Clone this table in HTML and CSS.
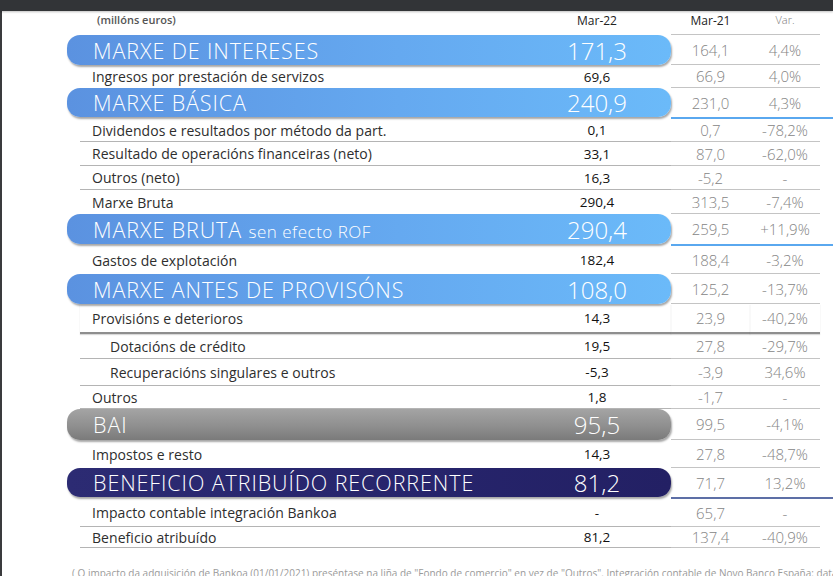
FILE: index.html
```html
<!DOCTYPE html>
<html lang="gl">
<head>
<meta charset="utf-8">
<title>Conta de resultados</title>
<link rel="stylesheet" href="styles.css">
</head>
<body>
<div class="topbar"></div>
<div class="page">
  <div class="table">
    <div class="row head">
      <div class="main"><span class="label units">(millóns euros)</span><span class="num hnum">Mar-22</span></div>
      <div class="c1 hcell">Mar-21</div>
      <div class="c2 hcell var">Var.</div>
    </div>

    <div class="row barrow h30">
      <div class="bar blue"><span class="blabel">MARXE DE INTERESES</span><span class="bnum">171,3</span></div>
      <div class="c1">164,1</div><div class="c2">4,4%</div>
    </div>
    <div class="row h23">
      <div class="main"><span class="label">Ingresos por prestación de servizos</span><span class="num">69,6</span></div>
      <div class="c1">66,9</div><div class="c2">4,0%</div>
    </div>
    <div class="row barrow h29">
      <div class="bar blue"><span class="blabel">MARXE BÁSICA</span><span class="bnum">240,9</span></div>
      <div class="c1 nb">231,0</div><div class="c2 nb">4,3%</div>
    </div>
    <div class="rule blue-rule"></div>

    <div class="row h23">
      <div class="main lined"><span class="label">Dividendos e resultados por método da part.</span><span class="num">0,1</span></div>
      <div class="c1">0,7</div><div class="c2">-78,2%</div>
    </div>
    <div class="row">
      <div class="main lined"><span class="label">Resultado de operacións financeiras (neto)</span><span class="num">33,1</span></div>
      <div class="c1">87,0</div><div class="c2">-62,0%</div>
    </div>
    <div class="row">
      <div class="main lined"><span class="label">Outros (neto)</span><span class="num">16,3</span></div>
      <div class="c1">-5,2</div><div class="c2">-</div>
    </div>
    <div class="row">
      <div class="main"><span class="label">Marxe Bruta</span><span class="num">290,4</span></div>
      <div class="c1">313,5</div><div class="c2">-7,4%</div>
    </div>
    <div class="row barrow h30">
      <div class="bar blue"><span class="blabel">MARXE BRUTA <span class="bsmall">sen efecto ROF</span></span><span class="bnum">290,4</span></div>
      <div class="c1 nb">259,5</div><div class="c2 nb">+11,9%</div>
    </div>
    <div class="rule blue-rule"></div>

    <div class="row h28">
      <div class="main"><span class="label">Gastos de explotación</span><span class="num">182,4</span></div>
      <div class="c1">188,4</div><div class="c2">-3,2%</div>
    </div>
    <div class="row barrow h30">
      <div class="bar blue"><span class="blabel">MARXE ANTES DE PROVISÓNS</span><span class="bnum">108,0</span></div>
      <div class="c1">125,2</div><div class="c2">-13,7%</div>
    </div>
    <div class="row h30 thick">
      <div class="main"><span class="label">Provisións e deterioros</span><span class="num">14,3</span></div>
      <div class="c1">23,9</div><div class="c2">-40,2%</div>
    </div>
    <div class="row h25">
      <div class="main lined"><span class="label sub">Dotacións de crédito</span><span class="num">19,5</span></div>
      <div class="c1">27,8</div><div class="c2">-29,7%</div>
    </div>
    <div class="row h27">
      <div class="main lined"><span class="label sub">Recuperacións singulares e outros</span><span class="num">-5,3</span></div>
      <div class="c1">-3,9</div><div class="c2">34,6%</div>
    </div>
    <div class="row h23">
      <div class="main lined"><span class="label">Outros</span><span class="num">1,8</span></div>
      <div class="c1">-1,7</div><div class="c2">-</div>
    </div>
    <div class="row barrow h31">
      <div class="bar grey"><span class="blabel">BAI</span><span class="bnum">95,5</span></div>
      <div class="c1">99,5</div><div class="c2">-4,1%</div>
    </div>
    <div class="row h28">
      <div class="main"><span class="label">Impostos e resto</span><span class="num">14,3</span></div>
      <div class="c1">27,8</div><div class="c2">-48,7%</div>
    </div>
    <div class="row barrow h29">
      <div class="bar navy"><span class="blabel">BENEFICIO ATRIBUÍDO RECORRENTE</span><span class="bnum">81,2</span></div>
      <div class="c1 nb">71,7</div><div class="c2 nb">13,2%</div>
    </div>
    <div class="rule navy-rule"></div>

    <div class="row h28">
      <div class="main lined"><span class="label">Impacto contable integración Bankoa</span><span class="num">-</span></div>
      <div class="c1">65,7</div><div class="c2">-</div>
    </div>
    <div class="row h21">
      <div class="main lined"><span class="label">Beneficio atribuído</span><span class="num">81,2</span></div>
      <div class="c1">137,4</div><div class="c2">-40,9%</div>
    </div>
  </div>
  <p class="footnote">( O impacto da adquisición de Bankoa (01/01/2021) preséntase na liña de "Fondo de comercio" en vez de "Outros". Integración contable de Novo Banco España: data efectiva</p>
</div>
</body>
</html>
```

FILE: styles.css
```css
* {
  box-sizing: border-box;
  margin: 0;
  padding: 0;
}

html,
body {
  width: 833px;
  height: 576px;
  overflow: hidden;
  background: #ffffff;
}

body {
  font-family: "Open Sans", "Liberation Sans", sans-serif;
  color: #333333;
}

.topbar {
  height: 11px;
  background: #323437;
  box-shadow: 0 1px 2px rgba(0, 0, 0, 0.25);
  position: relative;
  z-index: 2;
}

.page {
  height: 565px;
  border-left: 2px solid #3a3b3d;
  padding-left: 65px;
  overflow: hidden;
}

.table {
  width: 766px;
  display: flex;
  flex-direction: column;
}

.row {
  display: grid;
  grid-template-columns: 604px 79px 70px;
  height: 24px;
}

.h21 { height: 21px; }
.h23 { height: 23px; }
.h25 { height: 25px; }
.h27 { height: 27px; }
.h28 { height: 28px; }
.h29 { height: 29px; }
.h30 { height: 30px; }
.h31 { height: 31px; }

.main {
  display: flex;
  align-items: center;
  margin-left: 13px;
  padding-left: 12px;
  padding-right: 19px;
}

.main.lined {
  border-bottom: 1px solid #b4b4b4;
}

.label {
  flex: 1;
  font-size: 14px;
  letter-spacing: 0.05px;
  color: #2e2e2e;
  white-space: nowrap;
}

.label.sub {
  padding-left: 18px;
}

.num {
  width: 110px;
  text-align: center;
  font-size: 13.5px;
  color: #111111;
}

.c1,
.c2 {
  display: flex;
  align-items: center;
  justify-content: center;
  border-bottom: 1px solid #c4c4c4;
  font-size: 15px;
  font-weight: 300;
  color: #858585;
}

.c1.nb,
.c2.nb {
  border-bottom: none;
}

.head {
  height: 24px;
}

.head .main {
  align-items: flex-start;
  padding-top: 1px;
}

.units {
  padding-left: 5px;
  font-size: 11px;
  font-weight: 600;
  letter-spacing: 0;
  color: #555555;
}

.hnum,
.hcell {
  font-size: 12px;
  font-weight: 400;
  color: #222222;
}

.hcell {
  align-items: flex-start;
  padding-top: 1px;
}

.hcell.var {
  font-size: 11px;
  font-weight: 300;
  color: #7a7a7a;
}

.bar {
  position: relative;
  z-index: 1;
  display: flex;
  align-items: center;
  height: 30px;
  padding-left: 26px;
  padding-right: 19px;
  border-radius: 13px;
  color: #ffffff;
  box-shadow: 1px 2px 2px rgba(0, 0, 0, 0.35);
}

.h29 .bar {
  height: 29px;
}

.h31 .bar {
  height: 31px;
}

.blue {
  background: linear-gradient(to right, #5b92e0 0%, #65a9f0 55%, #6bbaf9 100%);
}

.grey {
  background: linear-gradient(to bottom, #a4a4a4 0%, #8f8f8f 55%, #7a7a7a 100%);
}

.navy {
  background: linear-gradient(to right, #2c2b73 0%, #26246b 60%, #232064 100%);
}

.blabel {
  flex: 1;
  font-size: 21.5px;
  font-weight: 300;
  white-space: nowrap;
  letter-spacing: 0.9px;
}

.bsmall {
  font-size: 17px;
  letter-spacing: 0.5px;
}

.bnum {
  width: 110px;
  text-align: center;
  font-size: 24px;
  font-weight: 300;
}

.rule {
  margin-left: 604px;
  width: 170px;
  height: 2px;
}

.blue-rule {
  background: #5aa8ef;
}

.navy-rule {
  background: #5d6fa6;
}

.thick .main,
.thick .c1,
.thick .c2 {
  border-bottom: 2px solid #8e8e8e;
  box-shadow: 0 1px 1px rgba(0, 0, 0, 0.15);
}

.footnote {
  margin-top: 19px;
  padding-left: 5px;
  font-size: 10px;
  line-height: 12px;
  color: #9a9a9a;
  white-space: nowrap;
}
```
